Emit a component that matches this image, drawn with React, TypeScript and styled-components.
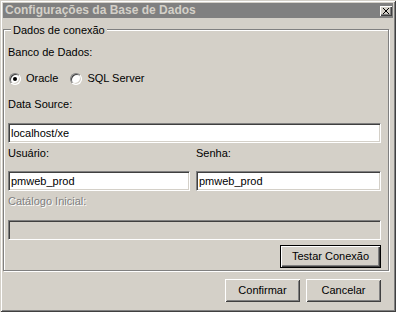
import styled, { createGlobalStyle } from "styled-components"

const face = "#D4D0C8"
const shadow = "#808080"
const dark = "#404040"

const GlobalStyle = createGlobalStyle`
  html, body {
    margin: 0;
    padding: 0;
    background: ${face};
  }
  * {
    box-sizing: border-box;
  }
`

export default function App() {
  return (
    <>
      <GlobalStyle />
      <Window>
        <TitleBar>
          <TitleText>Configurações da Base de Dados</TitleText>
          <CloseButton aria-label="Fechar">
            <svg width="6" height="6" viewBox="0 0 6 6" shapeRendering="crispEdges">
              <path d="M0 0h1v1H0zM1 1h1v1H1zM2 2h2v2H2zM4 1h1v1H4zM5 0h1v1H5zM1 4h1v1H1zM0 5h1v1H0zM4 4h1v1H4zM5 5h1v1H5z" fill="#000" />
            </svg>
          </CloseButton>
        </TitleBar>
        <Client>
          <GroupBox>
            <Legend>Dados de conexão</Legend>
            <Label>Banco de Dados:</Label>
            <RadioRow>
              <RadioOption>
                <Radio $checked />
                Oracle
              </RadioOption>
              <RadioOption>
                <Radio />
                SQL Server
              </RadioOption>
            </RadioRow>
            <Label $top={13}>Data Source:</Label>
            <TextBox $top={12} defaultValue="localhost/xe" />
            <TwoColumns>
              <Label $top={4}>Usuário:</Label>
              <Label $top={4}>Senha:</Label>
              <TextBox $top={11} defaultValue="pmweb_prod" />
              <TextBox $top={11} defaultValue="pmweb_prod" />
            </TwoColumns>
            <Label $top={4} $disabled>Catálogo Inicial:</Label>
            <TextBox $top={12} disabled />
            <GroupActions>
              <Button $default $width={101}>Testar Conexão</Button>
            </GroupActions>
          </GroupBox>
          <Footer>
            <Button>Confirmar</Button>
            <Button>Cancelar</Button>
          </Footer>
        </Client>
      </Window>
    </>
  )
}

const Window = styled.div`
  width: 396px;
  height: 312px;
  padding: 3px;
  display: flex;
  flex-direction: column;
  background: ${face};
  box-shadow:
    inset 1px 1px ${face},
    inset -1px -1px ${dark},
    inset 2px 2px #fff,
    inset -2px -2px ${shadow};
  font-family: "Liberation Sans", Arial, sans-serif;
  font-size: 11px;
  line-height: 13px;
  color: #000;
`
const TitleBar = styled.div`
  height: 15px;
  padding: 0 1px 0 2px;
  display: flex;
  align-items: center;
  justify-content: space-between;
  background: ${shadow};
`
const TitleText = styled.span`
  font-weight: bold;
  font-size: 12px;
  color: ${face};
  white-space: nowrap;
`
const CloseButton = styled.button`
  width: 12px;
  height: 10px;
  padding: 0;
  border: none;
  display: flex;
  align-items: center;
  justify-content: center;
  background: ${face};
  box-shadow:
    inset 1px 1px #fff,
    inset -1px -1px ${dark},
    inset -2px -2px ${shadow};
`
const Client = styled.div`
  flex: 1;
  display: flex;
  flex-direction: column;
`
const GroupBox = styled.div`
  position: relative;
  width: 386px;
  height: 242px;
  margin-top: 11px;
  padding: 16px 7px 2px 4px;
  display: flex;
  flex-direction: column;
  border: 1px solid ${shadow};
  box-shadow: inset 1px 1px #fff, 1px 1px #fff;
`
const Legend = styled.span`
  position: absolute;
  top: -6px;
  left: 7px;
  padding: 0 2px;
  background: ${face};
`
const Label = styled.div<{ $top?: number; $disabled?: boolean }>`
  height: 13px;
  margin-top: ${(p) => p.$top ?? 0}px;
  white-space: nowrap;
  color: ${(p) => (p.$disabled ? shadow : "#000")};
  text-shadow: ${(p) => (p.$disabled ? "1px 1px #fff" : "none")};
`
const RadioRow = styled.div`
  height: 13px;
  margin-top: 13px;
  padding-left: 1px;
  display: flex;
  align-items: center;
  gap: 12px;
`
const RadioOption = styled.label`
  display: flex;
  align-items: center;
  gap: 5px;
`
const Radio = styled.span<{ $checked?: boolean }>`
  position: relative;
  width: 12px;
  height: 12px;
  border-radius: 50%;
  border: 1px solid;
  border-color: ${shadow} #fff #fff ${shadow};
  background: #fff;
  box-shadow: inset 1px 1px ${dark}, inset -1px -1px ${face};
  &::after {
    content: "";
    display: ${(p) => (p.$checked ? "block" : "none")};
    position: absolute;
    left: 3px;
    top: 3px;
    width: 4px;
    height: 4px;
    border-radius: 50%;
    background: #000;
  }
`
const TextBox = styled.input<{ $top?: number }>`
  display: block;
  width: 100%;
  height: 20px;
  margin: ${(p) => p.$top ?? 0}px 0 0 0;
  padding: 0 2px;
  border: 1px solid;
  border-color: ${shadow} #fff #fff ${shadow};
  box-shadow: inset 1px 1px ${dark}, inset -1px -1px ${face};
  background: #fff;
  font: inherit;
  color: #000;
  outline: none;
  &:disabled {
    background: ${face};
  }
`
const TwoColumns = styled.div`
  display: grid;
  grid-template-columns: 182px 1fr;
  column-gap: 6px;
`
const GroupActions = styled.div`
  margin-top: 5px;
  display: flex;
  justify-content: flex-end;
`
const Button = styled.button<{ $default?: boolean; $width?: number }>`
  width: ${(p) => p.$width ?? 75}px;
  height: 23px;
  padding: 0;
  font: inherit;
  color: #000;
  background: ${face};
  border: ${(p) => (p.$default ? "1px solid #000" : "none")};
  box-shadow: ${(p) =>
    p.$default
      ? `inset 1px 1px #fff, inset -1px -1px ${dark}, inset -2px -2px ${shadow}`
      : `inset 1px 1px #fff, inset -1px -1px ${dark}, inset 2px 2px ${face}, inset -2px -2px ${shadow}`};
`
const Footer = styled.div`
  margin-top: 8px;
  padding-right: 12px;
  display: flex;
  justify-content: flex-end;
  gap: 6px;
`
